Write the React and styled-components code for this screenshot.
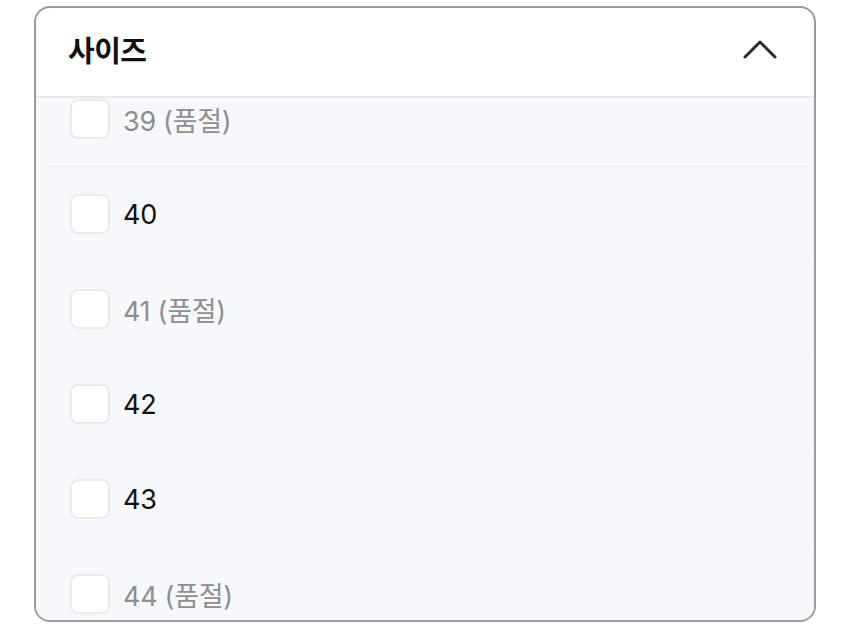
import React, { useLayoutEffect, useRef, useState } from "react";
import styled, { createGlobalStyle } from "styled-components";

const GlobalStyle = createGlobalStyle`
  html, body {
    margin: 0;
    padding: 0;
    background: #ffffff;
  }
  body {
    font-family: "Inter", "Noto Sans CJK KR", sans-serif;
    -webkit-font-smoothing: antialiased;
  }
`;

const sizes = [
  { value: "39", soldOut: true },
  { value: "40", soldOut: false },
  { value: "41", soldOut: true },
  { value: "42", soldOut: false },
  { value: "43", soldOut: false },
  { value: "44", soldOut: true },
];

const ChevronUp = () => (
  <svg width="34" height="20" viewBox="0 0 34 20" fill="none">
    <path
      d="M2 18 L17 3 L32 18"
      stroke="#2a2a2a"
      strokeWidth="3"
      strokeLinecap="round"
      strokeLinejoin="round"
    />
  </svg>
);

const SizeFilter = () => {
  const [open, setOpen] = useState(true);
  const [checked, setChecked] = useState({});
  const listRef = useRef(null);

  // the list is shown scrolled a little past the first option
  useLayoutEffect(() => {
    if (listRef.current) listRef.current.scrollTop = 26;
  }, [open]);

  const toggle = (value) =>
    setChecked((prev) => ({ ...prev, [value]: !prev[value] }));

  return (
    <Card>
      <Header onClick={() => setOpen(!open)}>
        <Title>사이즈</Title>
        <ToggleIcon $open={open}>
          <ChevronUp />
        </ToggleIcon>
      </Header>
      {open && (
        <OptionList ref={listRef}>
          {sizes.map((size) => (
            <OptionRow key={size.value}>
              <Box
                type="checkbox"
                checked={!!checked[size.value]}
                disabled={size.soldOut}
                onChange={() => toggle(size.value)}
              />
              <Label $soldOut={size.soldOut}>
                {size.value}
                {size.soldOut && " (품절)"}
              </Label>
            </OptionRow>
          ))}
        </OptionList>
      )}
    </Card>
  );
};

export default function App() {
  return (
    <>
      <GlobalStyle />
      <Page>
        <SizeFilter />
      </Page>
    </>
  );
}

// ================= STYLES =================
const Page = styled.div`
  padding: 6px 0 0 34px;
`;

const Card = styled.section`
  box-sizing: border-box;
  width: 782px;
  height: 616px;
  border: 2px solid #9b9b9b;
  border-radius: 16px;
  overflow: hidden;
  display: flex;
  flex-direction: column;
  background: #ffffff;
`;

const Header = styled.div`
  flex-shrink: 0;
  box-sizing: border-box;
  height: 90px;
  display: flex;
  align-items: center;
  justify-content: space-between;
  padding: 0 37px 6px 32px;
  border-bottom: 2px solid #e8e8ea;
  cursor: pointer;
`;

const Title = styled.h3`
  margin: 0;
  font-size: 29px;
  font-weight: 700;
  color: #111111;
  letter-spacing: -0.5px;
`;

const ToggleIcon = styled.span`
  display: flex;
  transform: rotate(${({ $open }) => ($open ? "0deg" : "180deg")});
`;

const OptionList = styled.div`
  flex: 1;
  overflow-y: auto;
  background: #f7f8fb;
  scrollbar-width: none;
  &::-webkit-scrollbar {
    display: none;
  }
`;

const OptionRow = styled.label`
  box-sizing: border-box;
  height: 95px;
  margin-left: 10px;
  padding-left: 24px;
  display: flex;
  align-items: center;
  gap: 13px;
  border-bottom: 1px solid #f0f1f4;
  cursor: pointer;
`;

const Box = styled.input`
  appearance: none;
  box-sizing: border-box;
  margin: 0;
  width: 40px;
  height: 40px;
  border: 2px solid #ebebed;
  border-radius: 8px;
  background: #ffffff;
  cursor: pointer;
  &:checked {
    background: #111111;
    border-color: #111111;
  }
  &:disabled {
    cursor: default;
  }
`;

const Label = styled.span`
  font-size: 27px;
  font-weight: 400;
  letter-spacing: -0.3px;
  color: ${({ $soldOut }) => ($soldOut ? "#8e8e90" : "#111111")};
`;
